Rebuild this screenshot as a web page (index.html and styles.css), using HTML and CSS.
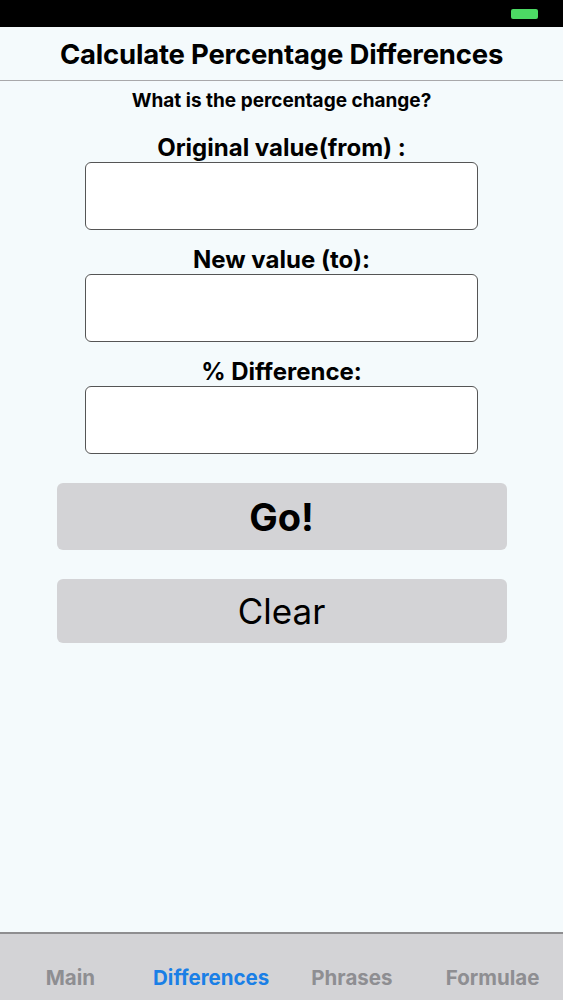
FILE: index.html
```html
<!DOCTYPE html>
<html lang="en">

<head>
    <meta charset="UTF-8">
    <meta name="viewport" content="width=device-width, initial-scale=1.0">
    <title>Calculate Percentage Differences</title>
    <link rel="stylesheet" href="styles.css">
</head>

<body>
    <div class="status-bar">
        <div class="battery"></div>
    </div>

    <div class="nav-bar">
        <h1>Calculate Percentage Differences</h1>
    </div>

    <div class="container">
        <p class="question">What is the percentage change?</p>

        <div class="field">
            <label class="field-label" for="fromValue">Original value(from) :</label>
            <input type="text" class="field-input" id="fromValue">
        </div>
        <div class="field">
            <label class="field-label" for="toValue">New value (to):</label>
            <input type="text" class="field-input" id="toValue">
        </div>
        <div class="field">
            <label class="field-label" for="result">% Difference:</label>
            <input type="text" class="field-input" id="result">
        </div>

        <button class="btn btn-go">Go!</button>
        <button class="btn btn-clear">Clear</button>
    </div>

    <div class="tab-bar">
        <span class="tab">Main</span>
        <span class="tab active">Differences</span>
        <span class="tab">Phrases</span>
        <span class="tab">Formulae</span>
    </div>
</body>

</html>
```

FILE: styles.css
```css
body {
    font-family: Inter, "Liberation Sans", sans-serif;
    margin: 0;
    padding: 0;
    height: 1000px;
    display: flex;
    flex-direction: column;
    background-color: #f4fafc;
    color: #000;
}

.status-bar {
    height: 27px;
    background-color: #000;
    display: flex;
    justify-content: flex-end;
    align-items: center;
    padding-right: 25px;
}

.battery {
    width: 27px;
    height: 10px;
    background-color: #4cd964;
    border-radius: 2px;
}

.nav-bar {
    height: 53px;
    border-bottom: 1px solid #a8a8aa;
    display: flex;
    align-items: center;
    justify-content: center;
}

h1 {
    margin: 0;
    font-size: 27.5px;
    font-weight: 700;
    letter-spacing: -0.2px;
}

.container {
    flex: 1;
    display: flex;
    flex-direction: column;
    align-items: center;
}

.question {
    margin: 9px 0 22px;
    font-size: 19px;
    line-height: 22px;
    font-weight: 700;
}

.field {
    display: flex;
    flex-direction: column;
    align-items: center;
    margin-bottom: 16px;
}

.field-label {
    font-size: 24px;
    font-weight: 700;
    line-height: 28px;
}

.field-input {
    width: 393px;
    height: 68px;
    box-sizing: border-box;
    border: 1px solid #555;
    border-radius: 6px;
    background-color: #fff;
}

.btn {
    width: 450px;
    border: none;
    border-radius: 6px;
    background-color: #d3d3d6;
    font-family: inherit;
    color: #000;
    cursor: pointer;
}

.btn-go {
    height: 67px;
    margin-top: 13px;
    font-size: 38px;
    font-weight: 700;
}

.btn-clear {
    height: 64px;
    margin-top: 29px;
    font-size: 35px;
    font-weight: 400;
}

.tab-bar {
    height: 66px;
    border-top: 2px solid #8e8e90;
    background-color: #d3d3d6;
    display: grid;
    grid-template-columns: repeat(4, 1fr);
    align-items: center;
}

.tab {
    text-align: center;
    font-size: 20.5px;
    font-weight: 700;
    color: #8e8e92;
    padding-top: 20px;
}

.tab.active {
    color: #1a7fe6;
}
```
